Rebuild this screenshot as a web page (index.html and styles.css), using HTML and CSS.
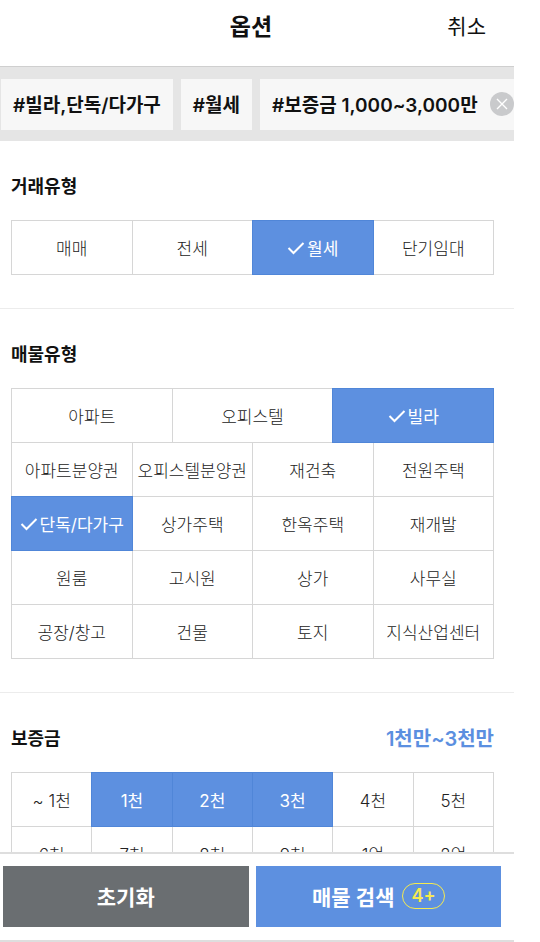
FILE: index.html
```html
<!DOCTYPE html>
<html lang="ko">
<head>
  <meta charset="UTF-8">
  <title>옵션</title>
  <meta name="viewport" content="width=device-width, initial-scale=1.0">
  <link rel="stylesheet" href="styles.css">
</head>
<body>
  <div class="app">
    <header class="header">
      <h1>옵션</h1>
      <button type="button" class="cancel">취소</button>
    </header>

    <div class="tags">
      <span class="tag">#빌라,단독/다가구</span>
      <span class="tag">#월세</span>
      <span class="tag">#보증금 1,000~3,000만
        <button type="button" class="tag-close" aria-label="삭제">
          <svg viewBox="0 0 24 24" width="24" height="24"><circle cx="12" cy="12" r="12" fill="#c9cacc"/><path d="M7 7l10 10M17 7L7 17" stroke="#fff" stroke-width="1.4" fill="none"/></svg>
        </button>
      </span>
    </div>

    <main class="content">
      <section class="section">
        <div class="section-head">
          <h2>거래유형</h2>
        </div>
        <div class="grid">
          <label class="cell"><input type="checkbox">매매</label>
          <label class="cell"><input type="checkbox">전세</label>
          <label class="cell"><input type="checkbox" checked><svg class="check" viewBox="0 0 18 14"><path d="M1.5 7l5 5L16.5 2"/></svg>월세</label>
          <label class="cell"><input type="checkbox">단기임대</label>
        </div>
      </section>

      <section class="section">
        <div class="section-head">
          <h2>매물유형</h2>
        </div>
        <div class="grid">
          <label class="cell cell-third"><input type="checkbox">아파트</label>
          <label class="cell cell-third"><input type="checkbox">오피스텔</label>
          <label class="cell cell-third"><input type="checkbox" checked><svg class="check" viewBox="0 0 18 14"><path d="M1.5 7l5 5L16.5 2"/></svg>빌라</label>
          <label class="cell"><input type="checkbox">아파트분양권</label>
          <label class="cell"><input type="checkbox">오피스텔분양권</label>
          <label class="cell"><input type="checkbox">재건축</label>
          <label class="cell"><input type="checkbox">전원주택</label>
          <label class="cell"><input type="checkbox" checked><svg class="check" viewBox="0 0 18 14"><path d="M1.5 7l5 5L16.5 2"/></svg>단독/다가구</label>
          <label class="cell"><input type="checkbox">상가주택</label>
          <label class="cell"><input type="checkbox">한옥주택</label>
          <label class="cell"><input type="checkbox">재개발</label>
          <label class="cell"><input type="checkbox">원룸</label>
          <label class="cell"><input type="checkbox">고시원</label>
          <label class="cell"><input type="checkbox">상가</label>
          <label class="cell"><input type="checkbox">사무실</label>
          <label class="cell"><input type="checkbox">공장/창고</label>
          <label class="cell"><input type="checkbox">건물</label>
          <label class="cell"><input type="checkbox">토지</label>
          <label class="cell"><input type="checkbox">지식산업센터</label>
        </div>
      </section>

      <section class="section">
        <div class="section-head">
          <h2>보증금</h2>
          <strong class="range">1천만~3천만</strong>
        </div>
        <div class="grid">
          <label class="cell cell-sixth"><input type="checkbox">~ 1천</label>
          <label class="cell cell-sixth"><input type="checkbox" checked>1천</label>
          <label class="cell cell-sixth"><input type="checkbox" checked>2천</label>
          <label class="cell cell-sixth"><input type="checkbox" checked>3천</label>
          <label class="cell cell-sixth"><input type="checkbox">4천</label>
          <label class="cell cell-sixth"><input type="checkbox">5천</label>
          <label class="cell cell-sixth"><input type="checkbox">6천</label>
          <label class="cell cell-sixth"><input type="checkbox">7천</label>
          <label class="cell cell-sixth"><input type="checkbox">8천</label>
          <label class="cell cell-sixth"><input type="checkbox">9천</label>
          <label class="cell cell-sixth"><input type="checkbox">1억</label>
          <label class="cell cell-sixth"><input type="checkbox">2억</label>
        </div>
      </section>
    </main>

    <footer class="footer">
      <button type="button" class="btn btn-reset">초기화</button>
      <button type="button" class="btn btn-search">매물 검색 <span class="count">4+</span></button>
    </footer>
  </div>
</body>
</html>
```
FILE: styles.css
```css
* {
  box-sizing: border-box;
}
body {
  margin: 0;
  padding-right: 26px;
  background: #fff;
  color: #111;
  font-family: Inter, 'Noto Sans CJK KR', sans-serif;
}
button {
  border: none;
  padding: 0;
  background: none;
  color: inherit;
  font-family: inherit;
  cursor: pointer;
}
.app {
  display: flex;
  flex-direction: column;
  height: 100vh;
}

/* header */
.header {
  display: grid;
  grid-template-columns: 1fr auto 1fr;
  align-items: center;
  flex: none;
  height: 67px;
  padding: 0 28px 12px 16px;
  border-bottom: 1px solid #cfcfcf;
}
.header h1 {
  grid-column: 2;
  margin: 0;
  font-size: 23px;
  line-height: 32px;
}
.cancel {
  justify-self: end;
  font-size: 21px;
  line-height: 32px;
}

/* selected filters */
.tags {
  display: flex;
  flex: none;
  gap: 8px;
  padding: 12px 0 11px 1px;
  background: #e5e5e5;
  overflow: hidden;
}
.tag {
  display: flex;
  flex: none;
  align-items: center;
  gap: 12px;
  height: 51px;
  padding: 0 12px 2px;
  background: #f7f7f7;
  font-size: 19px;
  font-weight: 600;
  white-space: nowrap;
}
.tag-close {
  display: flex;
}

/* options */
.content {
  flex: 1;
  min-height: 0;
  overflow-y: auto;
  scrollbar-width: none;
}
.section {
  padding: 32px 20px 33px 11px;
  border-bottom: 1px solid #ececec;
}
.section-head {
  display: flex;
  align-items: center;
  justify-content: space-between;
  height: 24px;
  margin-bottom: 23px;
}
.section-head h2 {
  margin: 0;
  font-size: 18px;
}
.range {
  color: #5b8fe0;
  font-size: 20px;
  font-weight: 600;
}
.grid {
  display: grid;
  grid-template-columns: repeat(12, 1fr);
  grid-auto-rows: 54px;
  padding: 1px 0 0 1px;
}
.cell {
  display: flex;
  grid-column: span 3;
  align-items: center;
  justify-content: center;
  margin: -1px 0 0 -1px;
  border: 1px solid #d6d6d6;
  color: #222;
  font-size: 17px;
  font-weight: 300;
  white-space: nowrap;
  cursor: pointer;
}
.cell-third {
  grid-column: span 4;
}
.cell-sixth {
  grid-column: span 2;
}
.cell input {
  appearance: none;
  width: 0;
  height: 0;
  margin: 0;
}
.cell:has(input:checked) {
  z-index: 1;
  border-color: #5086d8;
  background: #5d90e0;
  color: #fff;
  font-weight: 400;
}
.check {
  width: 18px;
  height: 14px;
  margin-right: 2px;
  fill: none;
  stroke: #fff;
  stroke-width: 2;
}

/* bottom buttons */
.footer {
  display: flex;
  flex: none;
  gap: 7px;
  padding: 12px 13px 13px 3px;
  border-top: 2px solid #dedede;
  border-bottom: 2px solid #dedede;
}
.btn {
  display: flex;
  flex: 1;
  align-items: center;
  justify-content: center;
  gap: 8px;
  height: 61px;
  padding-bottom: 2px;
  color: #fff;
  font-size: 21px;
  font-weight: 600;
}
.btn-reset {
  background: #6a6e71;
}
.btn-search {
  background: #5d90e0;
}
.count {
  padding: 0 8px;
  border: 1px solid #f5ea50;
  border-radius: 13px;
  color: #f5ea50;
  font-size: 18px;
  line-height: 24px;
}
```
